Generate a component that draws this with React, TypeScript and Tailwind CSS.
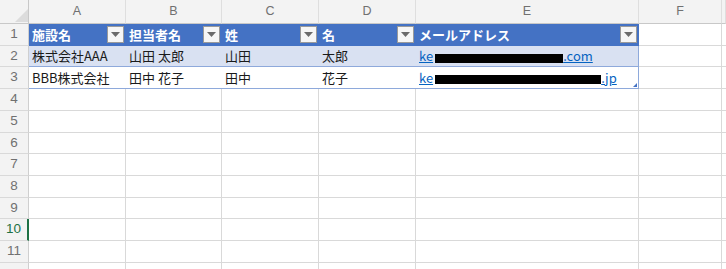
import React from "react";

const FONT = { fontFamily: '"Noto Sans CJK JP", "Noto Sans", sans-serif' };
const HFONT = { fontFamily: '"Liberation Sans", Roboto, sans-serif' };

const ROW_H = [
  "h-[22px]",
  "h-[21px]",
  "h-[22px]",
  "h-[22px]",
  "h-[22px]",
  "h-[21px]",
  "h-[22px]",
  "h-[22px]",
  "h-[21px]",
  "h-[22px]",
  "h-[22px]",
  "h-[22px]",
];

const GRID =
  "grid grid-cols-[29px_97px_96px_97px_97px_223px_83px_1fr]";

function Drop() {
  return (
    <div className="w-[17px] h-[17px] shrink-0 bg-[#f6f6f6] border border-[#9a9a9a] flex items-center justify-center">
      <svg width="9" height="5" viewBox="0 0 9 5">
        <polygon points="0,0 9,0 4.5,5" fill="#6b6b6b" />
      </svg>
    </div>
  );
}

function RowHead({ n, h, sel }: { n: number | null; h: string; sel?: boolean }) {
  return (
    <div
      className={
        h +
        " flex items-center justify-center bg-[#f3f3f3] border-b border-[#d9d9d9] text-[13.5px] " +
        (sel
          ? "text-[#1e7145] border-r-2 border-r-[#1e7145]"
          : "text-[#707070] border-r border-r-[#cfcfcf]")
      }
      style={HFONT}
    >
      {n}
    </div>
  );
}

function Email({ box, tail }: { box: string; tail: string }) {
  return (
    <span className="text-[#0563c1] underline flex items-center whitespace-nowrap">
      ke
      <span className={box + " inline-block h-[9px] bg-black translate-y-[2px] ml-[2px]"} />
      {tail}
    </span>
  );
}

export default function App() {
  const headers = ["施設名", "担当者名", "姓", "名", "メールアドレス"];
  const data: React.ReactNode[][] = [
    ["株式会社AAA", "山田 太郎", "山田", "太郎", <Email key="e1" box="w-[128px]" tail=".com" />],
    ["BBB株式会社", "田中 花子", "田中", "花子", <Email key="e2" box="w-[166px]" tail=".jp" />],
  ];
  const cols = ["A", "B", "C", "D", "E", "F", ""];

  return (
    <div className="w-[726px] h-[269px] overflow-hidden bg-white" style={FONT}>
      {/* column header band */}
      <div className={GRID + " h-[24px]"}>
        <div className="relative bg-[#f3f3f3] border-r border-b border-[#c8c8c8]">
          <svg className="absolute left-[15px] top-[9px]" width="13" height="13" viewBox="0 0 13 13">
            <polygon points="13,0 13,13 0,13" fill="#dcdcdc" />
          </svg>
        </div>
        {cols.map((c, i) => (
          <div
            key={i}
            className="flex items-center justify-center bg-[#f3f3f3] border-r border-r-[#dedede] border-b border-b-[#c8c8c8] text-[12.5px] text-[#707070]"
            style={HFONT}
          >
            {c}
          </div>
        ))}
      </div>

      {/* row 1: table header */}
      <div className={GRID + " " + ROW_H[0]}>
        <RowHead n={1} h={ROW_H[0]} />
        {headers.map((t, i) => (
          <div
            key={i}
            className="flex items-center justify-between pl-[3px] pr-[2px] bg-[#4472c4] border-b border-[#4472c4] text-white font-bold text-[13px] whitespace-nowrap"
          >
            <span>{t}</span>
            <Drop />
          </div>
        ))}
        <div className="border-r border-b border-[#d9d9d9]" />
        <div className="border-b border-[#d9d9d9]" />
      </div>

      {/* rows 2-3: table body */}
      {data.map((row, r) => (
        <div key={r} className={GRID + " " + ROW_H[r + 1]}>
          <RowHead n={r + 2} h={ROW_H[r + 1]} />
          {row.map((v, i) => (
            <div
              key={i}
              className={
                "relative flex items-center pl-[3px] text-[13px] text-[#1a1a1a] whitespace-nowrap border-b border-[#8ea9db] " +
                (r === 0 ? "bg-[#d9e1f2] " : "bg-white ") +
                (i === 4 ? "border-r border-r-[#8ea9db]" : "")
              }
            >
              {v}
              {r === 1 && i === 4 ? (
                <svg className="absolute right-[1px] bottom-[1px]" width="4" height="4" viewBox="0 0 4 4">
                  <polygon points="4,0 4,4 0,4" fill="#4472c4" />
                </svg>
              ) : null}
            </div>
          ))}
          <div className="border-r border-b border-[#d9d9d9]" />
          <div className="border-b border-[#d9d9d9]" />
        </div>
      ))}

      {/* empty rows 4-12 */}
      {[4, 5, 6, 7, 8, 9, 10, 11, 12].map((n) => (
        <div key={n} className={GRID + " " + ROW_H[n - 1]}>
          <RowHead n={n === 12 ? null : n} h={ROW_H[n - 1]} sel={n === 10} />
          <div className="border-r border-b border-[#d9d9d9]" />
          <div className="border-r border-b border-[#d9d9d9]" />
          <div className="border-r border-b border-[#d9d9d9]" />
          <div className="border-r border-b border-[#d9d9d9]" />
          <div className="border-r border-b border-[#d9d9d9]" />
          <div className="border-r border-b border-[#d9d9d9]" />
          <div className="border-b border-[#d9d9d9]" />
        </div>
      ))}
    </div>
  );
}
